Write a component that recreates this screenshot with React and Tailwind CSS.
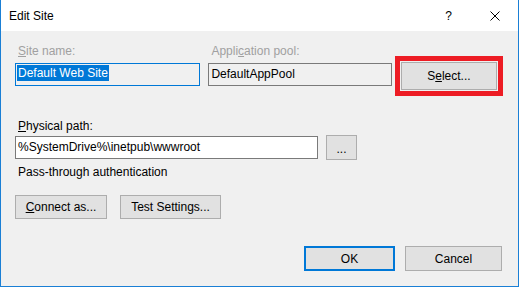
import React from "react";

const Btn = ({ children, className = "" }) => (
  <button
    className={`flex items-center justify-center border border-[#adadad] bg-[#e1e1e1] text-[12px] leading-[16px] text-black ${className}`}
  >
    {children}
  </button>
);

export default function App() {
  return (
    <div
      className="w-[519px] h-[287px] flex flex-col bg-[#f0f0f0] border-x border-b border-[#1a7fd5] text-black"
      style={{ fontFamily: '"Liberation Sans", Arial, sans-serif' }}
    >
      {/* Title bar */}
      <div className="h-[31px] shrink-0 bg-white flex items-center pl-[8px] pr-[18px]">
        <span className="text-[12px] leading-[16px] mt-[1px]">Edit Site</span>
        <span className="ml-auto text-[12px] leading-[16px] mt-[1px]">?</span>
        <svg className="ml-[38px] mt-[1px]" width="10" height="10" viewBox="0 0 10 10">
          <path d="M0.5 0.5 L9.5 9.5 M9.5 0.5 L0.5 9.5" stroke="#000" strokeWidth="1" />
        </svg>
      </div>

      {/* Body */}
      <div className="flex flex-col pl-[14px] pr-[15px]">
        {/* Site name / Application pool / Select */}
        <div className="flex items-start mt-[12px]">
          <div className="w-[187px] flex flex-col">
            <span className="pl-[3px] text-[12px] leading-[16px] text-[#a0a0a0] mb-[4px]">
              <span className="underline">S</span>ite name:
            </span>
            <div className="h-[23px] border border-[#0078d7] bg-[#f0f0f0] pt-[1px] pl-[1px] text-[12px] leading-[16px]">
              <span className="bg-[#0078d7] text-white pl-[1px] pr-[1px] inline-block">Default Web Site</span>
            </div>
          </div>
          <div className="w-[185px] ml-[8px] flex flex-col">
            <span className="pl-[3px] text-[12px] leading-[16px] text-[#a0a0a0] mb-[4px]">
              Appli<span className="underline">c</span>ation pool:
            </span>
            <div className="h-[23px] border border-[#7a7a7a] bg-[#f0f0f0] pt-[2px] pl-[2px] text-[12px] leading-[16px]">
              DefaultAppPool
            </div>
          </div>
          <div className="ml-[3px] mt-[13px] w-[109px] h-[40px] border-[5px] border-[#ed1c24] p-[1px] flex">
            <Btn className="w-full h-full">
              S<span className="underline">e</span>lect...
            </Btn>
          </div>
        </div>

        {/* Physical path */}
        <span className="mt-[22px] pl-[3px] text-[12px] leading-[16px]">
          <span className="underline">P</span>hysical path:
        </span>
        <div className="flex items-center mt-[1px]">
          <div className="w-[303px] h-[23px] border border-[#7a7a7a] bg-white pt-[2px] pl-[2px] text-[12px] leading-[16px]">
            %SystemDrive%\inetpub\wwwroot
          </div>
          <Btn className="ml-[8px] w-[31px] h-[25px] pt-[2px]">...</Btn>
        </div>

        <span className="mt-[4px] pl-[3px] text-[12px] leading-[16px]">Pass-through authentication</span>

        <div className="flex mt-[15px] gap-[13px]">
          <Btn className="w-[92px] h-[24px]">
            <span className="underline">C</span>onnect as...
          </Btn>
          <Btn className="w-[101px] h-[24px]">Test Settings...</Btn>
        </div>

        {/* Dialog buttons */}
        <div className="flex justify-end mt-[27px] gap-[10px] pr-[1px]">
          <button className="w-[91px] h-[25px] border-2 border-[#0078d7] bg-[#e1e1e1] text-[12px] leading-[16px] flex items-center justify-center">
            OK
          </button>
          <Btn className="w-[97px] h-[25px]">Cancel</Btn>
        </div>
      </div>
    </div>
  );
}
